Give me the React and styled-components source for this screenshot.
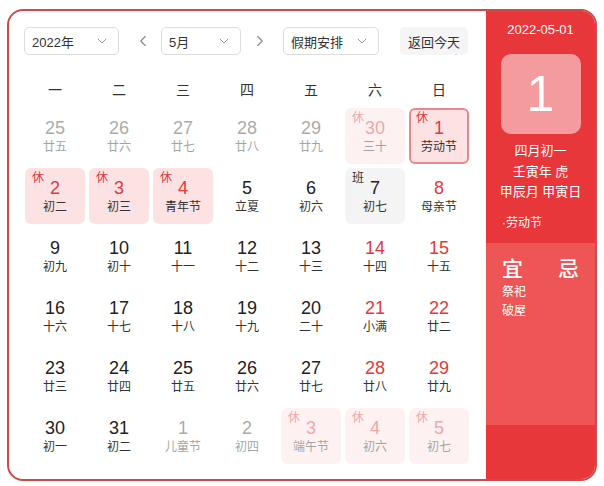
import React from 'react';
import styled, { createGlobalStyle } from 'styled-components';
import { ChevronDown, ChevronLeft, ChevronRight } from 'lucide-react';

const GlobalStyle = createGlobalStyle`
  body {
    margin: 0;
    background: #fff;
    font-family: "Liberation Sans", "Noto Sans CJK SC", sans-serif;
    color: #333;
  }
`;

const Frame = styled.div`
  margin: 9px 0 0 7px;
  width: 590px;
  height: 472px;
  box-sizing: border-box;
  border: 2px solid #cc4b4b;
  border-radius: 16px;
  overflow: hidden;
  display: flex;
`;

const Main = styled.div`
  width: 477px;
  padding: 16px 0 0 16px;
  box-sizing: border-box;
`;

const Toolbar = styled.div`
  display: flex;
  align-items: center;
  height: 28px;
  margin-left: -1px;
`;

const Select = styled.div`
  width: ${props => props.w}px;
  height: 28px;
  box-sizing: border-box;
  border: 1px solid #dcdcdc;
  border-radius: 5px;
  display: flex;
  align-items: center;
  justify-content: space-between;
  padding: 0 8px 0 7px;
  font-size: 13px;
  color: #333;
  background: #fff;
`;

const Arrow = styled.div`
  display: flex;
  align-items: center;
  justify-content: center;
  width: 20px;
  margin: ${props => props.m};
  color: #888;
`;

const TodayButton = styled.div`
  margin-left: ${props => props.ml}px;
  width: 68px;
  height: 28px;
  border-radius: 5px;
  background: #f5f5f5;
  font-size: 13px;
  display: flex;
  align-items: center;
  justify-content: center;
`;

const Weekdays = styled.div`
  display: grid;
  grid-template-columns: repeat(7, 60px);
  column-gap: 4px;
  height: 39px;
  margin-top: 14px;
  align-items: center;
`;

const Weekday = styled.div`
  text-align: center;
  font-size: 14px;
  color: #333;
`;

const Grid = styled.div`
  display: grid;
  grid-template-columns: repeat(7, 60px);
  grid-auto-rows: 56px;
  gap: 4px;
`;

const Cell = styled.div`
  position: relative;
  box-sizing: border-box;
  border-radius: 6px;
  display: flex;
  flex-direction: column;
  align-items: center;
  justify-content: center;
  background: ${props => (props.rest ? '#fde2e4' : props.work ? '#f4f4f4' : 'transparent')};
  border: ${props => (props.selected ? '2px solid #e8878e' : 'none')};
  opacity: ${props => (props.other ? 0.45 : 1)};
`;

const Num = styled.div`
  font-size: 18px;
  line-height: 22px;
  color: ${props => (props.red ? '#e0393e' : props.other ? '#444' : '#222')};
`;

const Lunar = styled.div`
  font-size: 12px;
  line-height: 16px;
  color: #333;
`;

const Tag = styled.span`
  position: absolute;
  top: ${props => (props.selected ? 1 : 3)}px;
  left: ${props => (props.selected ? 5 : 7)}px;
  font-size: 12px;
  line-height: 14px;
  color: ${props => (props.work ? '#333' : '#e0393e')};
`;

const Side = styled.div`
  flex: 1;
  display: flex;
  flex-direction: column;
  color: #fff;
`;

const SideTop = styled.div`
  height: 232px;
  background: #e8373b;
  display: flex;
  flex-direction: column;
  align-items: center;
  padding-top: 10px;
  box-sizing: border-box;
`;

const DateText = styled.div`
  font-size: 13px;
  line-height: 18px;
`;

const DayBox = styled.div`
  margin-top: 15px;
  width: 80px;
  height: 80px;
  border-radius: 10px;
  background: rgba(255, 255, 255, 0.5);
  display: flex;
  align-items: center;
  justify-content: center;
  font-size: 50px;
  font-weight: 300;
`;

const LunarInfo = styled.div`
  margin-top: 7px;
  font-size: 13px;
  line-height: 20.5px;
  text-align: center;
`;

const Festival = styled.div`
  align-self: stretch;
  padding-left: 16px;
  margin-top: 12px;
  font-size: 12px;
  line-height: 16px;
`;

const SideMid = styled.div`
  height: 182px;
  background: #ed5557;
  padding: 14px 16px 0;
  box-sizing: border-box;
`;

const YiJi = styled.div`
  display: flex;
  justify-content: space-between;
  font-size: 21px;
  line-height: 24px;
  font-weight: 500;
`;

const Items = styled.div`
  margin-top: 2px;
  font-size: 12px;
  line-height: 19px;
`;

const SideBottom = styled.div`
  flex: 1;
  background: #e8373b;
`;

const weekdays = ['一', '二', '三', '四', '五', '六', '日'];

const raw = [
  [25, '廿五', 'o'], [26, '廿六', 'o'], [27, '廿七', 'o'], [28, '廿八', 'o'], [29, '廿九', 'o'], [30, '三十', 'or'], [1, '劳动节', 'rs'],
  [2, '初二', 'r'], [3, '初三', 'r'], [4, '青年节', 'r'], [5, '立夏', ''], [6, '初六', ''], [7, '初七', 'b'], [8, '母亲节', 'w'],
  [9, '初九', ''], [10, '初十', ''], [11, '十一', ''], [12, '十二', ''], [13, '十三', ''], [14, '十四', 'w'], [15, '十五', 'w'],
  [16, '十六', ''], [17, '十七', ''], [18, '十八', ''], [19, '十九', ''], [20, '二十', ''], [21, '小满', 'w'], [22, '廿二', 'w'],
  [23, '廿三', ''], [24, '廿四', ''], [25, '廿五', ''], [26, '廿六', ''], [27, '廿七', ''], [28, '廿八', 'w'], [29, '廿九', 'w'],
  [30, '初一', ''], [31, '初二', ''], [1, '儿童节', 'o'], [2, '初四', 'o'], [3, '端午节', 'or'], [4, '初六', 'or'], [5, '初七', 'or'],
];

const days = raw.map(([d, l, f]) => ({
  d,
  l,
  other: f.includes('o'),
  rest: f.includes('r'),
  work: f.includes('b'),
  weekend: f.includes('w'),
  selected: f.includes('s'),
}));

const App = () => (
  <>
    <GlobalStyle />
    <Frame>
      <Main>
        <Toolbar>
          <Select w={95}>
            2022年 <ChevronDown size={16} color="#999" strokeWidth={1.5} />
          </Select>
          <Arrow m="0 8px 0 14px">
            <ChevronLeft size={18} strokeWidth={1.5} />
          </Arrow>
          <Select w={80}>
            5月 <ChevronDown size={16} color="#999" strokeWidth={1.5} />
          </Select>
          <Arrow m="0 13px 0 9px">
            <ChevronRight size={18} strokeWidth={1.5} />
          </Arrow>
          <Select w={96}>
            假期安排 <ChevronDown size={16} color="#999" strokeWidth={1.5} />
          </Select>
          <TodayButton ml={21}>返回今天</TodayButton>
        </Toolbar>
        <Weekdays>
          {weekdays.map(w => (
            <Weekday key={w}>{w}</Weekday>
          ))}
        </Weekdays>
        <Grid>
          {days.map((x, i) => (
            <Cell key={i} other={x.other} rest={x.rest} work={x.work} selected={x.selected}>
              {x.rest && <Tag selected={x.selected}>休</Tag>}
              {x.work && <Tag work>班</Tag>}
              <Num red={x.rest || x.weekend} other={x.other}>{x.d}</Num>
              <Lunar>{x.l}</Lunar>
            </Cell>
          ))}
        </Grid>
      </Main>
      <Side>
        <SideTop>
          <DateText>2022-05-01</DateText>
          <DayBox>1</DayBox>
          <LunarInfo>
            四月初一
            <br />
            壬寅年 虎
            <br />
            甲辰月 甲寅日
          </LunarInfo>
          <Festival>·劳动节</Festival>
        </SideTop>
        <SideMid>
          <YiJi>
            <span>宜</span>
            <span>忌</span>
          </YiJi>
          <Items>
            祭祀
            <br />
            破屋
          </Items>
        </SideMid>
        <SideBottom />
      </Side>
    </Frame>
  </>
);

export default App;
